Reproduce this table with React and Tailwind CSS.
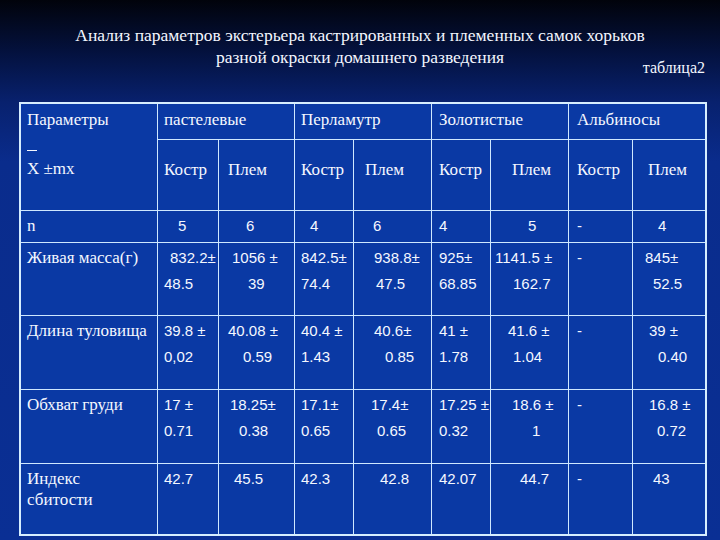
import React from "react";

const serif = "font-['Liberation_Serif','DejaVu_Serif',serif]";
const sans = "font-['Liberation_Sans',Arial,sans-serif]";

const groups = [
  { name: "пастелевые", pl: "pl-[6px]", col: "col-start-2 col-span-2" },
  { name: "Перламутр", pl: "pl-[6px]", col: "col-start-4 col-span-2" },
  { name: "Золотистые", pl: "pl-[7px]", col: "col-start-6 col-span-2" },
  { name: "Альбиносы", pl: "pl-[8px]", col: "col-start-8 col-span-2" },
];

const subHeads = [
  ["Костр", "pl-[6px]"],
  ["Плем", "pl-[9px]"],
  ["Костр", "pl-[6px]"],
  ["Плем", "pl-[11px]"],
  ["Костр", "pl-[7px]"],
  ["Плем", "pl-[21px]"],
  ["Костр", "pl-[8px]"],
  ["Плем", "pl-[15px]"],
];

const rows = [
  {
    label: ["n"],
    cells: [
      [["5", "pl-[20px]"]],
      [["6", "pl-[27px]"]],
      [["4", "pl-[15px]"]],
      [["6", "pl-[19px]"]],
      [["4", "pl-[7px]"]],
      [["5", "pl-[37px]"]],
      [["-", "pl-[8px]"]],
      [["4", "pl-[25px]"]],
    ],
  },
  {
    label: ["Живая масса(г)"],
    cells: [
      [["832.2±", "pl-[12px]"], ["48.5", "pl-[6px]"]],
      [["1056 ±", "pl-[13px]"], ["39", "pl-[29px]"]],
      [["842.5±", "pl-[6px]"], ["74.4", "pl-[6px]"]],
      [["938.8±", "pl-[20px]"], ["47.5", "pl-[22px]"]],
      [["925±", "pl-[7px]"], ["68.85", "pl-[7px]"]],
      [["1141.5 ±", "pl-[4px]"], ["162.7", "pl-[22px]"]],
      [["-", "pl-[8px]"]],
      [["845±", "pl-[12px]"], ["52.5", "pl-[20px]"]],
    ],
  },
  {
    label: ["Длина туловища"],
    cells: [
      [["39.8 ±", "pl-[6px]"], ["0,02", "pl-[6px]"]],
      [["40.08 ±", "pl-[9px]"], ["0.59", "pl-[24px]"]],
      [["40.4 ±", "pl-[6px]"], ["1.43", "pl-[6px]"]],
      [["40.6±", "pl-[20px]"], ["0.85", "pl-[31px]"]],
      [["41 ±", "pl-[7px]"], ["1.78", "pl-[7px]"]],
      [["41.6 ±", "pl-[17px]"], ["1.04", "pl-[22px]"]],
      [["-", "pl-[8px]"]],
      [["39 ±", "pl-[16px]"], ["0.40", "pl-[25px]"]],
    ],
  },
  {
    label: ["Обхват груди"],
    cells: [
      [["17 ±", "pl-[6px]"], ["0.71", "pl-[6px]"]],
      [["18.25±", "pl-[11px]"], ["0.38", "pl-[20px]"]],
      [["17.1±", "pl-[6px]"], ["0.65", "pl-[6px]"]],
      [["17.4±", "pl-[17px]"], ["0.65", "pl-[23px]"]],
      [["17.25 ±", "pl-[7px]"], ["0.32", "pl-[7px]"]],
      [["18.6 ±", "pl-[21px]"], ["1", "pl-[41px]"]],
      [["-", "pl-[8px]"]],
      [["16.8 ±", "pl-[16px]"], ["0.72", "pl-[24px]"]],
    ],
  },
  {
    label: ["Индекс", "сбитости"],
    tight: true,
    cells: [
      [["42.7", "pl-[6px]"]],
      [["45.5", "pl-[15px]"]],
      [["42.3", "pl-[6px]"]],
      [["42.8", "pl-[26px]"]],
      [["42.07", "pl-[7px]"]],
      [["44.7", "pl-[29px]"]],
      [["-", "pl-[8px]"]],
      [["43", "pl-[20px]"]],
    ],
  },
];

const cellBg = "bg-[#0a39a4]";

export default function App() {
  return (
    <div className="w-[720px] h-[540px] overflow-hidden bg-[linear-gradient(180deg,#01030b_0%,#041240_10%,#08216e_19%,#0a2c8c_30%,#0a2f94_100%)] text-[#f4f7ff]">
      <div className={`pt-[24px] text-[17.5px] leading-[22px] text-center ${serif}`}>
        <div>Анализ параметров экстерьера кастрированных и племенных самок хорьков</div>
        <div>разной окраски домашнего разведения</div>
      </div>
      <div className={`mt-[-11px] flex justify-end pr-[15px] text-[16px] leading-[22px] ${serif}`}>
        таблица2
      </div>
      <div className="mt-[23px] ml-[19px] w-[688px] border-2 border-[#d6eeff] bg-[#cfe8ff]">
        <div className="grid gap-px grid-cols-[136px_60px_75px_58px_77px_58px_77px_63px_72px] grid-rows-[35px_70px_31px_72px_73px_73px_70px]">
          <div className={`${cellBg} ${serif} row-span-2 col-start-1 row-start-1 pl-[6px] pt-[3px] text-[17px] leading-[26px]`}>
            <div>Параметры</div>
            <div className="mt-[17px] h-px w-[10px] bg-[#f4f7ff]"></div>
            <div className="mt-[5px]">X ±mx</div>
          </div>
          {groups.map((g) => (
            <div key={g.name} className={`${cellBg} ${serif} ${g.col} row-start-1 ${g.pl} pt-[3px] text-[17px] leading-[26px]`}>
              {g.name}
            </div>
          ))}
          {subHeads.map(([t, pl], i) => (
            <div key={i} className={`${cellBg} ${serif} row-start-2 ${pl} pt-[17px] text-[17px] leading-[26px] whitespace-nowrap`}>
              {t}
            </div>
          ))}
          {rows.map((r, ri) => (
            <React.Fragment key={ri}>
              <div
                className={`${cellBg} ${serif} pl-[6px] text-[17px] whitespace-nowrap ${r.tight ? "pt-[4px] leading-[21px]" : "pt-[2px] leading-[26px]"}`}
              >
                {r.label.map((l, li) => (
                  <div key={li}>{l}</div>
                ))}
              </div>
              {r.cells.map((c, ci) => (
                <div
                  key={ci}
                  className={`${cellBg} ${sans} pt-[2px] text-[15px] leading-[26px] whitespace-nowrap overflow-visible relative z-10`}
                >
                  {c.map(([t, pl], li) => (
                    <div key={li} className={pl}>
                      {t}
                    </div>
                  ))}
                </div>
              ))}
            </React.Fragment>
          ))}
        </div>
      </div>
    </div>
  );
}
